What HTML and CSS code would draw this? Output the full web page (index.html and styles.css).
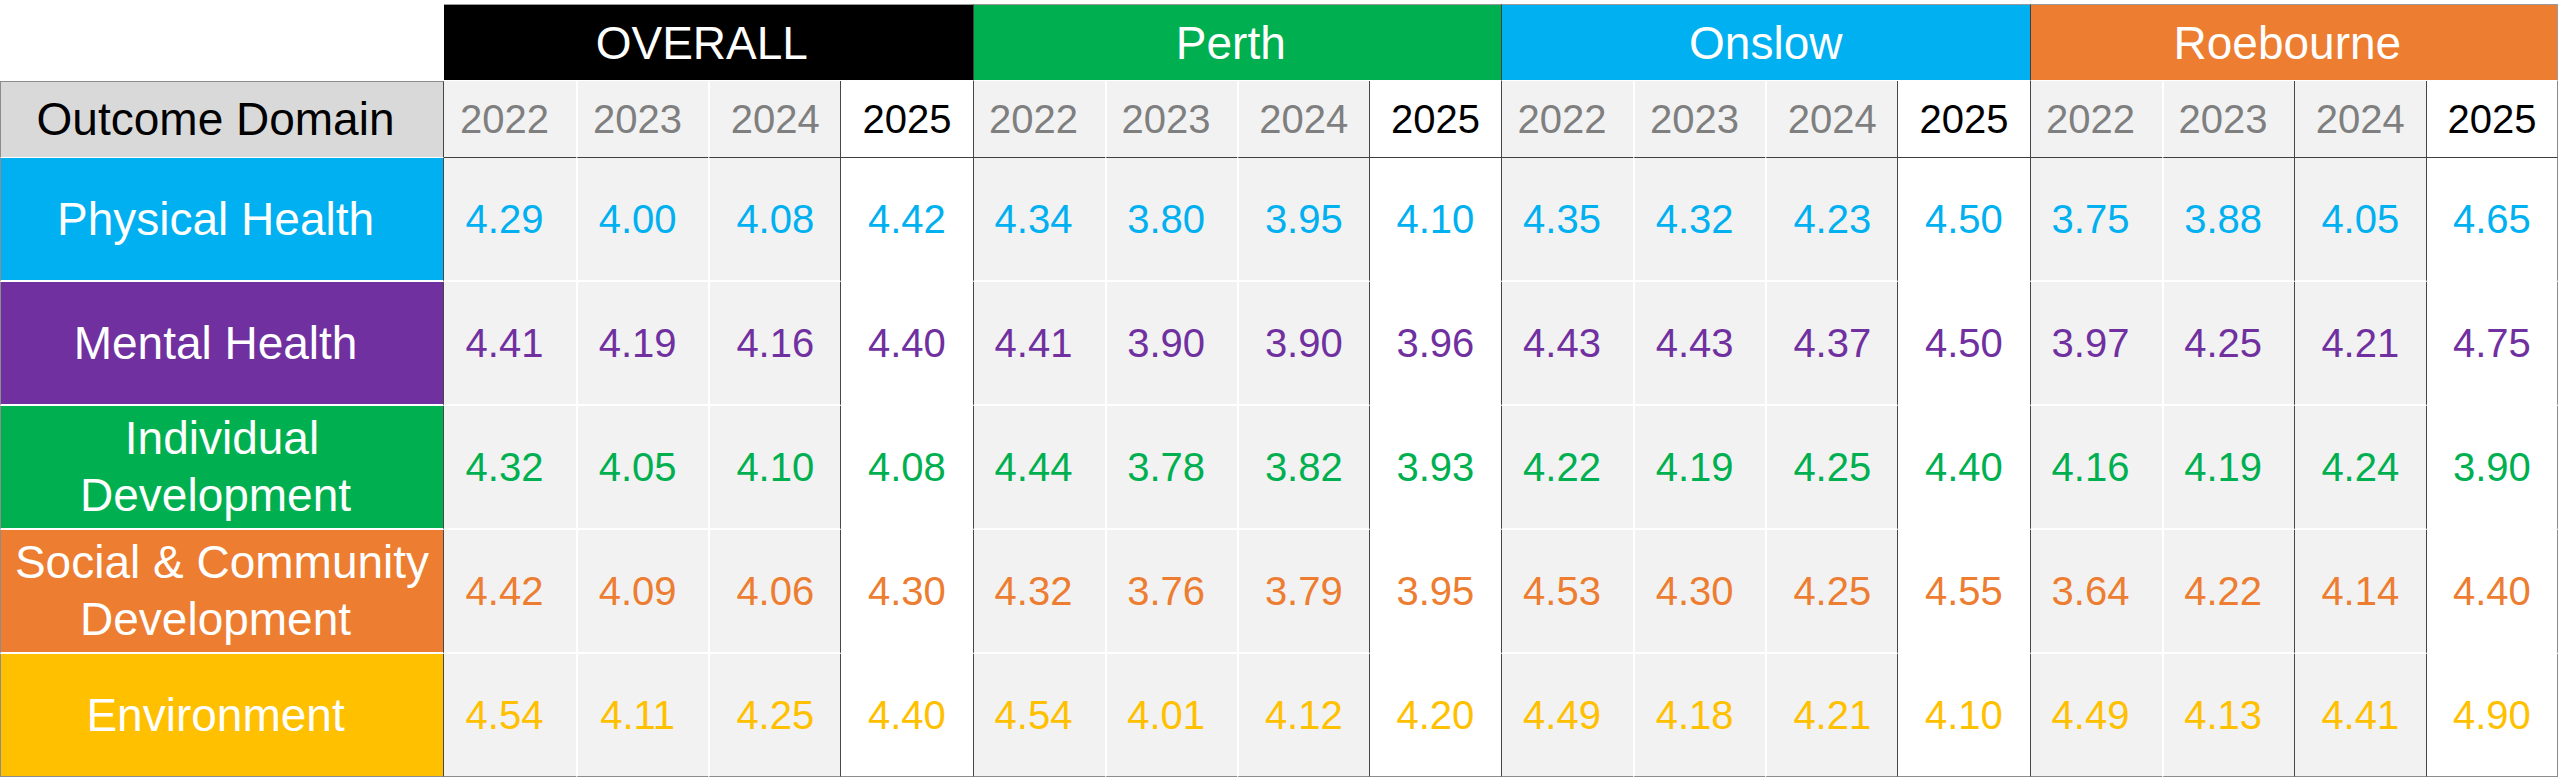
FILE: index.html
```html
<!DOCTYPE html>
<html lang="en">
<head>
<meta charset="utf-8">
<title>Outcome Domain Scores</title>
<link rel="stylesheet" href="styles.css">
</head>
<body>
<div class="sheet">
  <div class="row top">
    <div class="corner"></div>
    <div class="cell grp overall"><span class="t">OVERALL</span></div>
    <div class="cell grp perth"><span class="t">Perth</span></div>
    <div class="cell grp onslow">Onslow</div>
    <div class="cell grp roe"><span class="t">Roebourne</span></div>
  </div>
  <div class="row years">
    <div class="cell label head"><span class="t">Outcome Domain</span></div>
    <div class="cell v">2022</div><div class="cell v w">2023</div><div class="cell v w">2024</div><div class="cell v cur">2025</div>
    <div class="cell v a">2022</div><div class="cell v w">2023</div><div class="cell v w">2024</div><div class="cell v cur">2025</div>
    <div class="cell v a">2022</div><div class="cell v w">2023</div><div class="cell v w">2024</div><div class="cell v cur">2025</div>
    <div class="cell v a">2022</div><div class="cell v w">2023</div><div class="cell v d">2024</div><div class="cell v cur end">2025</div>
  </div>
  <div class="row ph">
    <div class="cell label"><span class="t">Physical Health</span></div>
    <div class="cell v">4.29</div><div class="cell v w">4.00</div><div class="cell v w">4.08</div><div class="cell v cur">4.42</div>
    <div class="cell v a">4.34</div><div class="cell v w">3.80</div><div class="cell v w">3.95</div><div class="cell v cur">4.10</div>
    <div class="cell v a">4.35</div><div class="cell v w">4.32</div><div class="cell v w">4.23</div><div class="cell v cur">4.50</div>
    <div class="cell v a">3.75</div><div class="cell v w">3.88</div><div class="cell v d">4.05</div><div class="cell v cur end">4.65</div>
  </div>
  <div class="row mh">
    <div class="cell label"><span class="t">Mental Health</span></div>
    <div class="cell v">4.41</div><div class="cell v w">4.19</div><div class="cell v w">4.16</div><div class="cell v cur">4.40</div>
    <div class="cell v a">4.41</div><div class="cell v w">3.90</div><div class="cell v w">3.90</div><div class="cell v cur">3.96</div>
    <div class="cell v a">4.43</div><div class="cell v w">4.43</div><div class="cell v w">4.37</div><div class="cell v cur">4.50</div>
    <div class="cell v a">3.97</div><div class="cell v w">4.25</div><div class="cell v d">4.21</div><div class="cell v cur end">4.75</div>
  </div>
  <div class="row id">
    <div class="cell label"><span>Individual<br><span class="t">Development</span></span></div>
    <div class="cell v">4.32</div><div class="cell v w">4.05</div><div class="cell v w">4.10</div><div class="cell v cur">4.08</div>
    <div class="cell v a">4.44</div><div class="cell v w">3.78</div><div class="cell v w">3.82</div><div class="cell v cur">3.93</div>
    <div class="cell v a">4.22</div><div class="cell v w">4.19</div><div class="cell v w">4.25</div><div class="cell v cur">4.40</div>
    <div class="cell v a">4.16</div><div class="cell v w">4.19</div><div class="cell v d">4.24</div><div class="cell v cur end">3.90</div>
  </div>
  <div class="row sc">
    <div class="cell label"><span>Social &amp; Community<br><span class="t">Development</span></span></div>
    <div class="cell v">4.42</div><div class="cell v w">4.09</div><div class="cell v w">4.06</div><div class="cell v cur">4.30</div>
    <div class="cell v a">4.32</div><div class="cell v w">3.76</div><div class="cell v w">3.79</div><div class="cell v cur">3.95</div>
    <div class="cell v a">4.53</div><div class="cell v w">4.30</div><div class="cell v w">4.25</div><div class="cell v cur">4.55</div>
    <div class="cell v a">3.64</div><div class="cell v w">4.22</div><div class="cell v d">4.14</div><div class="cell v cur end">4.40</div>
  </div>
  <div class="row en last">
    <div class="cell label"><span class="t">Environment</span></div>
    <div class="cell v">4.54</div><div class="cell v w">4.11</div><div class="cell v w">4.25</div><div class="cell v cur">4.40</div>
    <div class="cell v a">4.54</div><div class="cell v w">4.01</div><div class="cell v w">4.12</div><div class="cell v cur">4.20</div>
    <div class="cell v a">4.49</div><div class="cell v w">4.18</div><div class="cell v w">4.21</div><div class="cell v cur">4.10</div>
    <div class="cell v a">4.49</div><div class="cell v w">4.13</div><div class="cell v d">4.41</div><div class="cell v cur end">4.90</div>
  </div>
</div>
</body>
</html>
```
FILE: styles.css
```css
* {
  box-sizing: border-box;
  margin: 0;
  padding: 0;
}

body {
  background: #ffffff;
  font-family: "Liberation Sans", Arial, Helvetica, sans-serif;
}

.sheet {
  display: grid;
  grid-template-columns: 444px repeat(16, 1fr);
  grid-template-rows: 77px 77px repeat(4, 124px) 123px;
  width: 2558px;
  margin-top: 4px;
}

.row {
  display: contents;
}

.cell {
  display: flex;
  align-items: center;
  justify-content: center;
  text-align: center;
  white-space: nowrap;
}

.t {
  padding-right: 0.28em;
}

/* Group header band */
.grp {
  grid-column: span 4;
  color: #ffffff;
  font-size: 46px;
  border-top: 1px solid #9a9a9a;
  border-bottom: 1px solid #ffffff;
}

.grp.overall { background: #000000; }
.grp.perth { background: #00b050; border-left: 1px solid #404040; }
.grp.onslow { background: #00b0f0; border-left: 1px solid #404040; }
.grp.roe { background: #ed7d31; border-left: 1px solid #404040; border-right: 1px solid #9a9a9a; }

/* Domain labels */
.label {
  font-size: 46px;
  line-height: 57px;
  color: #ffffff;
  border-left: 1px solid #8c8c8c;
  border-right: 1px solid #474747;
  border-bottom: 2px solid #ffffff;
}

.label.head {
  background: #d9d9d9;
  color: #000000;
  border-top: 1px solid #8c8c8c;
  border-bottom: 1px solid #ffffff;
}

.ph { color: #00b0f0; }
.mh { color: #7030a0; }
.id { color: #00b050; }
.sc { color: #ed7d31; }
.en { color: #ffc000; }

.ph .label { background: #00b0f0; }
.mh .label { background: #7030a0; }
.id .label { background: #00b050; }
.sc .label { background: #ed7d31; }
.en .label { background: #ffc000; }

/* Value cells */
.v {
  font-size: 40px;
  background: #f2f2f2;
  border-bottom: 2px solid #ffffff;
}

/* the 2022 and 2023 columns of every group carry a trailing space */
.row > .v:nth-child(4n+2),
.row > .v:nth-child(4n+3) {
  padding-right: 0.28em;
}

.years .v {
  color: #7f7f7f;
  border-bottom: 1px solid #404040;
}

.v.w { border-left: 2px solid #ffffff; }
.v.a,
.v.d { border-left: 1px solid #474747; }

.v.cur {
  background: #ffffff;
  border-left: 1px solid #474747;
}

.years .v.cur { color: #000000; }

.v.end { border-right: 1px solid #8c8c8c; }

.last .v,
.last .label { border-bottom: 1px solid #8c8c8c; }
```
